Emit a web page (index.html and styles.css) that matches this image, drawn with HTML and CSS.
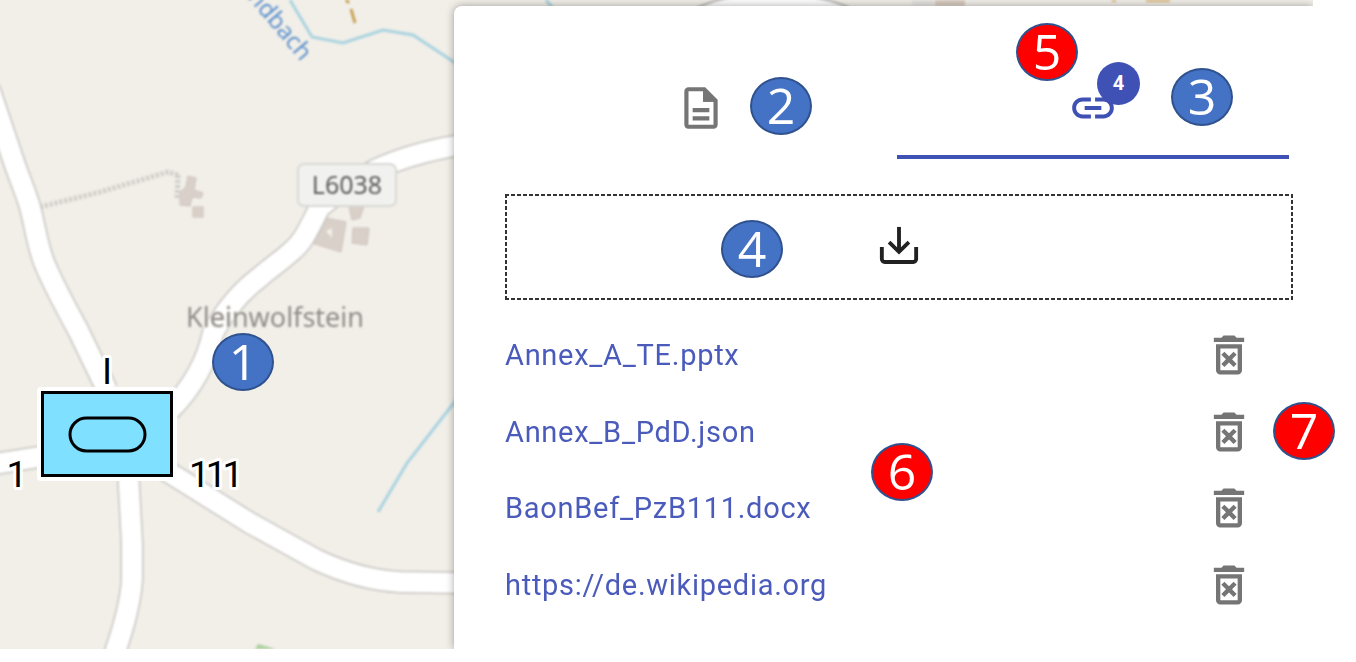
FILE: index.html
```html
<!DOCTYPE html>
<html lang="en">
<head>
    <meta charset="UTF-8">
    <meta name="viewport" content="width=device-width, initial-scale=1.0">
    <title>Attachments</title>
    <link rel="stylesheet" href="styles.css">
</head>
<body>

    <div class="scene">
        <div class="stage">
            <svg class="map" viewBox="0 0 1313 649" width="1313" height="649">
                <rect width="1313" height="649" fill="#f2efe9"/>
                <g class="map-soft">
                    <!-- streams -->
                    <path class="stream" d="M290 0 L312 37 L343 43 L383 30 L413 35 L460 66"/>
                    <path class="stream" d="M460 395 L407 463 L378 512"/>
                    <path class="stream" d="M546 0 L552 7"/>
                    <!-- track -->
                    <path class="track" d="M40 207 L100 192 L168 172 L178 175"/>
                    <path class="track" d="M178 175 L177 198"/>
                    <!-- buildings -->
                    <path class="building" d="M188 176 L196 178 L194 190 L203 193 L201 198 L192 197 L190 206 L180 205 L180 192 L186 187Z"/>
                    <rect class="building" x="193" y="207" width="10" height="10"/>
                    <path class="building" d="M326 218 L346 222 L341 252 L312 243Z"/>
                    <path class="building" d="M353 228 L369 228 L367 245 L352 243Z"/>
                    <path class="building" d="M349 206 L364 206 L360 218 L352 220Z"/>
                    <path d="M326 231 L332 228 L332 238Z" fill="#f2efe9"/>
                    <!-- roads -->
                    <g class="casing">
                        <path d="M-11 88 L11 153 C16 170 25 190 30 207 C36 230 38 250 46 267 C56 290 66 308 78 330 L107 390"/>
                        <path d="M460 145 C430 150 400 158 375 170 C350 183 335 195 320 207 C310 225 305 240 293 250 C280 262 270 268 260 277 C240 292 225 310 213 333 C207 360 195 385 170 410"/>
                        <path d="M165 470 L250 523 L317 560 Q360 580 400 582 L460 583"/>
                        <path d="M128 470 L132 543 L132 580 Q130 610 114 655"/>
                        <path d="M-5 464 L45 456"/>
                    </g>
                    <g class="road">
                        <path d="M-11 88 L11 153 C16 170 25 190 30 207 C36 230 38 250 46 267 C56 290 66 308 78 330 L107 390"/>
                        <path d="M460 145 C430 150 400 158 375 170 C350 183 335 195 320 207 C310 225 305 240 293 250 C280 262 270 268 260 277 C240 292 225 310 213 333 C207 360 195 385 170 410"/>
                        <path d="M165 470 L250 523 L317 560 Q360 580 400 582 L460 583"/>
                        <path d="M128 470 L132 543 L132 580 Q130 610 114 655"/>
                        <path d="M-5 464 L45 456"/>
                    </g>
                    <!-- top strip above the panel -->
                    <path class="casing-thin" d="M697 8 Q725 -6 770 -6 Q820 -6 850 8"/>
                    <rect x="912" y="0" width="22" height="6" fill="#e6e4e0"/>
                    <rect x="935" y="0" width="30" height="6" fill="#d9ccc0"/>
                    <rect x="1112" y="0" width="4" height="2" fill="#d9b878"/>
                    <rect x="1146" y="0" width="24" height="2" fill="#d9b878"/>
                    <path d="M346 0 L349 3 M351 9 L355 23" stroke="#c9a458" stroke-width="3" fill="none"/>
                    <path d="M255 649 L258 644 L276 649Z" fill="#add19e"/>
                    <text class="river-label" transform="translate(301 62) rotate(50)" text-anchor="end">ndbach</text>
                    <text class="place-label" x="275" y="327" text-anchor="middle">Kleinwolfstein</text>
                    <rect class="shield" x="298" y="164" width="98" height="42" rx="6"/>
                    <text class="shield-label" x="347" y="194" text-anchor="middle">L6038</text>
                </g>
                <!-- unit symbol -->
                <rect class="unit-halo" x="37" y="387" width="140" height="94" rx="4"/>
                <rect class="unit-frame" x="42.5" y="392.5" width="129" height="83"/>
                <rect class="unit-oval" x="70" y="418" width="75" height="33" rx="16.5"/>
                <text class="unit-label" x="107" y="384" text-anchor="middle">I</text>
                <text class="unit-label" x="17" y="487" text-anchor="middle">1</text>
                <text class="unit-label unit-number" x="189" y="487">111</text>
            </svg>

            <section class="panel">
                <div class="tabs">
                    <div class="tab">
                        <svg class="icon-tab" viewBox="0 0 24 24" fill="#757575">
                            <path d="M8 16h8v2H8zm0-4h8v2H8zm6-10H6c-1.1 0-2 .9-2 2v16c0 1.1.89 2 1.99 2H18c1.1 0 2-.9 2-2V8l-6-6zm4 18H6V4h7v5h5v11z"/>
                            <path d="M13 3h1l5 5v1h-6z"/>
                        </svg>
                    </div>
                    <div class="tab active">
                        <span class="tab-icon">
                            <svg class="icon-tab" viewBox="0 0 24 24" fill="#3f51b5">
                                <path d="M3.9 12c0-1.71 1.39-3.1 3.1-3.1h4V7H7c-2.76 0-5 2.24-5 5s2.24 5 5 5h4v-1.9H7c-1.71 0-3.1-1.39-3.1-3.1zM8 13h8v-2H8v2zm9-6h-4v1.9h4c1.71 0 3.1 1.39 3.1 3.1s-1.39 3.1-3.1 3.1h-4V17h4c2.76 0 5-2.24 5-5s-2.24-5-5-5z"/>
                            </svg>
                            <span class="badge">4</span>
                        </span>
                    </div>
                </div>

                <div class="dropzone">
                    <svg class="icon-download" viewBox="0 0 24 24">
                        <path d="M4.9 12v5a1.2 1.2 0 0 0 1.2 1.2h11.8a1.2 1.2 0 0 0 1.2-1.2v-5"/>
                        <path d="M12 3.7v10"/>
                        <path d="M7.9 10l4.1 4 4.1-4"/>
                    </svg>
                </div>

                <ul class="files">
                    <li><a href="#">Annex_A_TE.pptx</a><svg class="icon-delete" viewBox="0 0 24 24"><path d="M14.12 10.47L12 12.59l-2.13-2.12-1.41 1.41L10.59 14l-2.12 2.12 1.41 1.41L12 15.41l2.12 2.12 1.41-1.41L13.41 14l2.12-2.12zM15.5 4l-1-1h-5l-1 1H5v2h14V4zM6 19c0 1.1.9 2 2 2h8c1.1 0 2-.9 2-2V7H6v12zM8 9h8v10H8V9z"/></svg></li>
                    <li><a href="#">Annex_B_PdD.json</a><svg class="icon-delete" viewBox="0 0 24 24"><path d="M14.12 10.47L12 12.59l-2.13-2.12-1.41 1.41L10.59 14l-2.12 2.12 1.41 1.41L12 15.41l2.12 2.12 1.41-1.41L13.41 14l2.12-2.12zM15.5 4l-1-1h-5l-1 1H5v2h14V4zM6 19c0 1.1.9 2 2 2h8c1.1 0 2-.9 2-2V7H6v12zM8 9h8v10H8V9z"/></svg></li>
                    <li><a href="#">BaonBef_PzB111.docx</a><svg class="icon-delete" viewBox="0 0 24 24"><path d="M14.12 10.47L12 12.59l-2.13-2.12-1.41 1.41L10.59 14l-2.12 2.12 1.41 1.41L12 15.41l2.12 2.12 1.41-1.41L13.41 14l2.12-2.12zM15.5 4l-1-1h-5l-1 1H5v2h14V4zM6 19c0 1.1.9 2 2 2h8c1.1 0 2-.9 2-2V7H6v12zM8 9h8v10H8V9z"/></svg></li>
                    <li><a href="#">https://de.wikipedia.org</a><svg class="icon-delete" viewBox="0 0 24 24"><path d="M14.12 10.47L12 12.59l-2.13-2.12-1.41 1.41L10.59 14l-2.12 2.12 1.41 1.41L12 15.41l2.12 2.12 1.41-1.41L13.41 14l2.12-2.12zM15.5 4l-1-1h-5l-1 1H5v2h14V4zM6 19c0 1.1.9 2 2 2h8c1.1 0 2-.9 2-2V7H6v12zM8 9h8v10H8V9z"/></svg></li>
                </ul>
            </section>
        </div>

        <!-- numbered callouts over the screenshot -->
        <span class="callout c1">1</span>
        <span class="callout c2">2</span>
        <span class="callout c3">3</span>
        <span class="callout c4">4</span>
        <span class="callout red c5">5</span>
        <span class="callout red c6">6</span>
        <span class="callout red c7">7</span>
    </div>

</body>
</html>
```

FILE: styles.css
```css
body {
    margin: 0;
    background-color: #fff;
    font-family: Roboto, sans-serif;
}

.scene {
    position: relative;
    width: 1356px;
    height: 662px;
}

.stage {
    position: relative;
    width: 1313px;
    height: 649px;
    overflow: hidden;
}

/* map */
.map {
    position: absolute;
    top: 0;
    left: 0;
}

.map-soft {
    filter: blur(0.8px);
}

.stream {
    fill: none;
    stroke: #aad3df;
    stroke-width: 3;
}

.track {
    fill: none;
    stroke: #cfcdc8;
    stroke-width: 5;
    stroke-dasharray: 3 2;
}

.building {
    fill: #d9d0c9;
    stroke: #cbc2ba;
    stroke-width: 1;
}

.casing path {
    fill: none;
    stroke: #c6c4c0;
    stroke-width: 23;
}

.road path {
    fill: none;
    stroke: #fff;
    stroke-width: 20;
}

.casing-thin {
    fill: #fff;
    stroke: #b5b3af;
    stroke-width: 2;
}

.river-label {
    font-family: "Noto Sans", sans-serif;
    font-size: 24px;
    fill: #5f92cc;
}

.place-label {
    font-family: "Noto Sans", sans-serif;
    font-size: 27px;
    fill: #8f8b88;
    stroke: #f2efe9;
    stroke-width: 2;
    paint-order: stroke;
}

.shield {
    fill: #f1f1ef;
    stroke: #d8d8d4;
    stroke-width: 2;
}

.shield-label {
    font-family: "Noto Sans", sans-serif;
    font-size: 25px;
    fill: #5c5c5c;
}

.unit-halo {
    fill: #fff;
}

.unit-frame {
    fill: #80e0ff;
    stroke: #000;
    stroke-width: 3;
}

.unit-oval {
    fill: none;
    stroke: #000;
    stroke-width: 3;
}

.unit-label {
    font-family: Roboto, sans-serif;
    font-size: 37px;
    fill: #000;
    stroke: #fff;
    stroke-width: 6;
    stroke-linejoin: round;
    paint-order: stroke;
}

.unit-number {
    letter-spacing: -4px;
}

/* panel */
.panel {
    position: absolute;
    top: 6px;
    left: 454px;
    width: 859px;
    height: 643px;
    box-sizing: border-box;
    padding: 54px 20px 0 51px;
    background-color: #fff;
    border-top-left-radius: 8px;
    box-shadow: 0 0 8px rgba(0, 0, 0, 0.35);
}

.tabs {
    display: flex;
    width: 784px;
}

.tab {
    flex: 1;
    height: 99px;
    box-sizing: border-box;
    display: flex;
    justify-content: center;
    align-items: center;
    border-bottom: 4px solid transparent;
}

.tab.active {
    border-bottom-color: #3f51b5;
}

.tab-icon {
    position: relative;
    display: flex;
}

.icon-tab {
    width: 50px;
    height: 50px;
    filter: blur(0.4px);
}

.badge {
    position: absolute;
    top: -21px;
    right: -22px;
    width: 43px;
    height: 43px;
    border-radius: 50%;
    background-color: #3f51b5;
    color: #fff;
    font-size: 20px;
    font-weight: 700;
    line-height: 43px;
    text-align: center;
}

/* dashes drawn by hand, the browser's dashed border is too loose */
.dropzone {
    display: flex;
    justify-content: center;
    align-items: center;
    height: 106px;
    box-sizing: border-box;
    margin-top: 35px;
    background-image:
        repeating-linear-gradient(90deg, #333 0 4px, transparent 4px 6px),
        repeating-linear-gradient(90deg, #333 0 4px, transparent 4px 6px),
        repeating-linear-gradient(0deg, #333 0 4px, transparent 4px 6px),
        repeating-linear-gradient(0deg, #333 0 4px, transparent 4px 6px);
    background-size: 100% 2px, 100% 2px, 2px 100%, 2px 100%;
    background-position: top, bottom, left, right;
    background-repeat: no-repeat;
}

.icon-download {
    width: 58px;
    height: 58px;
    fill: none;
    stroke: #212121;
    stroke-width: 1.6;
    filter: blur(0.3px);
}

.files {
    list-style: none;
    margin: 17px 0 0;
    padding: 0 38px 0 0;
}

.files li {
    display: flex;
    justify-content: space-between;
    align-items: center;
    height: 76.5px;
}

.files a {
    color: #4a5bbb;
    font-size: 29px;
    letter-spacing: 0.72px;
    text-decoration: none;
    filter: blur(0.3px);
}

.icon-delete {
    width: 52px;
    height: 52px;
    fill: #757575;
    filter: blur(0.4px);
}

/* callouts */
.callout {
    position: absolute;
    width: 62px;
    height: 58px;
    box-sizing: border-box;
    border: 2px solid #2f528f;
    border-radius: 50%;
    background-color: #4472c4;
    color: #fff;
    font-family: "Open Sans", sans-serif;
    font-size: 50px;
    line-height: 52px;
    text-align: center;
}

.callout.red {
    background-color: #f00;
}

.c1 { left: 212px; top: 333px; }
.c2 { left: 750px; top: 77px; }
.c3 { left: 1171px; top: 68px; }
.c4 { left: 721px; top: 220px; }
.c5 { left: 1016px; top: 23px; }
.c6 { left: 871px; top: 443px; }
.c7 { left: 1273px; top: 402px; }
```
